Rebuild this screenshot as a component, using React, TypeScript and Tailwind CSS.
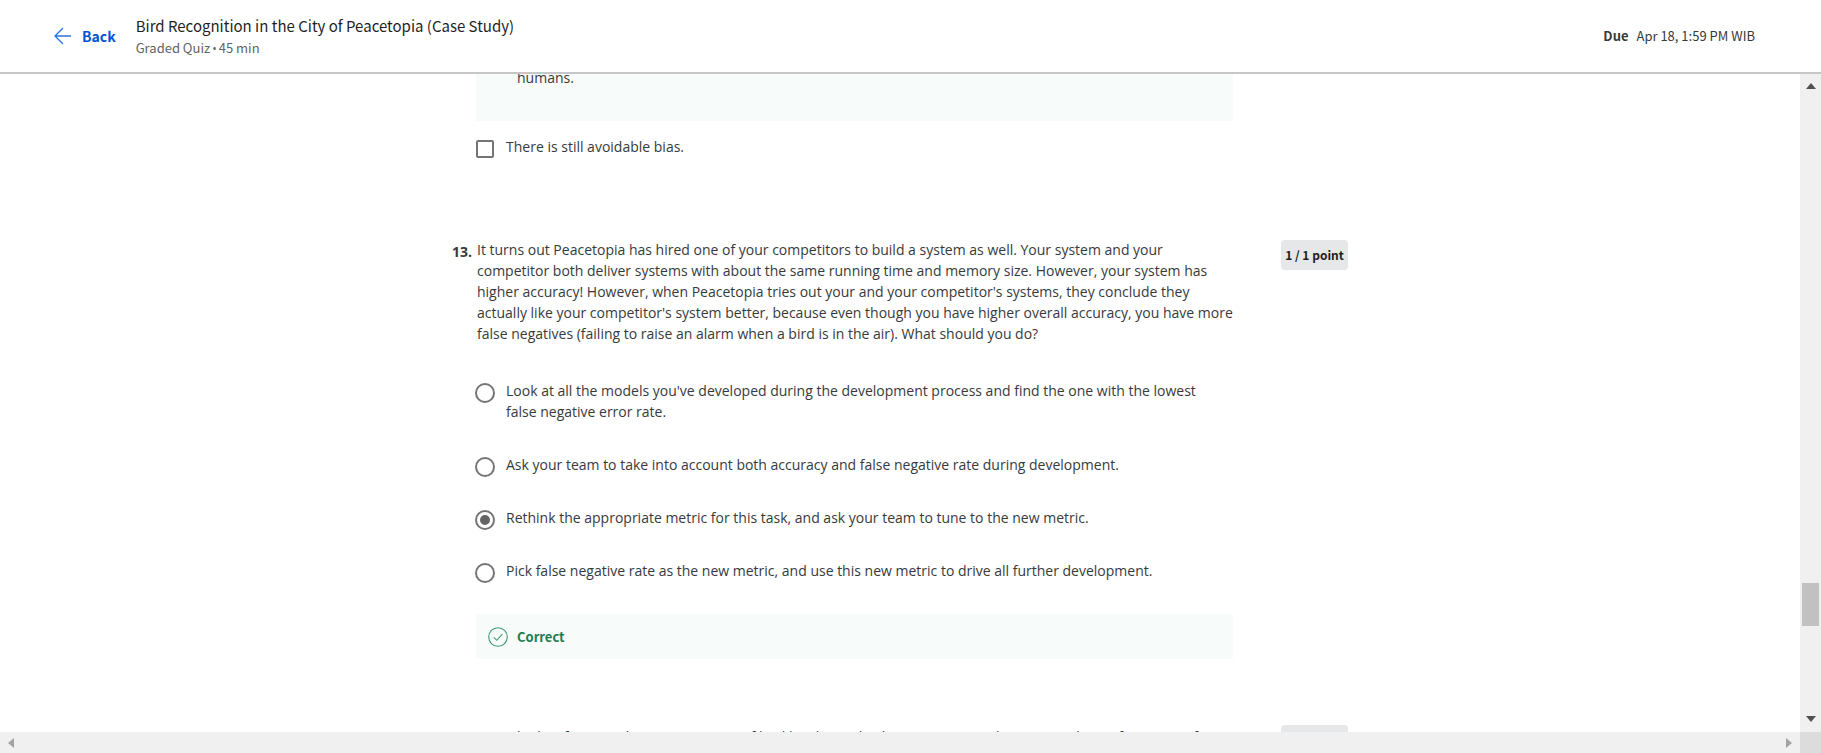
import { useState } from "react";

const options = [
  "Look at all the models you've developed during the development process and find the one with the lowest false negative error rate.",
  "Ask your team to take into account both accuracy and false negative rate during development.",
  "Rethink the appropriate metric for this task, and ask your team to tune to the new metric.",
  "Pick false negative rate as the new metric, and use this new metric to drive all further development.",
];

function Header() {
  return (
    <header className="flex h-[74px] shrink-0 items-center border-b-2 border-[#c7c7c7] bg-white pl-[54px] pr-[66px] font-['Noto_Sans_CJK_SC','Open_Sans',sans-serif]">
      <a href="#back" className="flex items-center gap-[10px] text-[14px] font-bold text-[#0056d2]">
        <svg width="18" height="18" viewBox="0 0 18 18" fill="none" stroke="#2a73e0" strokeWidth="1.3" aria-hidden="true">
          <path d="M17 9H1.2M9 1L1 9l8 8" />
        </svg>
        Back
      </a>
      <div className="ml-5 flex-1 pt-[2px]">
        <h1 className="text-[15px] leading-[22px] text-[#1f1f1f]">Bird Recognition in the City of Peacetopia (Case Study)</h1>
        <p className="text-[13px] leading-[22px] text-[#636363]">
          Graded Quiz<span className="px-[2px] font-['Open_Sans',sans-serif] text-xs">•</span>45 min
        </p>
      </div>
      <p className="flex gap-2 text-[13px] text-[#373a3c]">
        <strong className="font-bold">Due</strong>
        <span>Apr 18, 1:59 PM WIB</span>
      </p>
    </header>
  );
}

function Points() {
  return (
    <div className="ml-12 mt-px h-[30px] w-[67px] shrink-0 self-start whitespace-nowrap rounded bg-[#e5e7e8] text-center font-['Noto_Sans_CJK_SC','Open_Sans',sans-serif] text-xs font-bold leading-[29px] text-[#1f1f1f]">
      1 / 1 point
    </div>
  );
}

function VerticalScrollbar() {
  return (
    <div className="flex w-[21px] shrink-0 flex-col items-center bg-[#f0f0f0] pb-[10px] pt-[9px]" aria-hidden="true">
      <svg width="10" height="6" viewBox="0 0 10 6" fill="#505050">
        <path d="M0 6L5 0l5 6z" />
      </svg>
      <div className="grow-[494]" />
      <div className="h-[43px] w-[17px] bg-[#c1c1c1]" />
      <div className="grow-[90]" />
      <svg width="10" height="6" viewBox="0 0 10 6" fill="#505050">
        <path d="M0 0L5 6l5-6z" />
      </svg>
    </div>
  );
}

function HorizontalScrollbar() {
  return (
    <div className="flex h-[21px] shrink-0 bg-[#f0f0f0]" aria-hidden="true">
      <div className="flex flex-1 items-center justify-between px-2">
        <svg width="6" height="10" viewBox="0 0 6 10" fill="#a3a3a3">
          <path d="M6 0L0 5l6 5z" />
        </svg>
        <svg width="6" height="10" viewBox="0 0 6 10" fill="#a3a3a3">
          <path d="M0 0l6 5-6 5z" />
        </svg>
      </div>
      <div className="w-[21px] bg-[#dcdcdc]" />
    </div>
  );
}

export default function App() {
  const [bias, setBias] = useState(false);
  const [choice, setChoice] = useState(2);

  return (
    <div className="flex h-screen flex-col bg-white font-['Open_Sans','Noto_Sans',sans-serif] text-[#373a3c]">
      <Header />
      <div className="flex min-h-0 flex-1">
        <main className="min-w-0 flex-1 overflow-hidden text-sm leading-[21px]">
          <div className="mx-auto -mt-2 w-full max-w-4xl">
            <section className="ml-6 mr-[115px]">
              <div className="h-[55px] bg-[#f7fbfa] pl-[41px] pt-px">humans.</div>
              <label className="flex items-start gap-3 pt-[15px]">
                <input
                  type="checkbox"
                  checked={bias}
                  onChange={() => setBias(!bias)}
                  className="mt-1 size-[18px] shrink-0 appearance-none rounded-xs border-2 border-[#757575] checked:bg-[#757575]"
                />
                There is still avoidable bias.
              </label>
            </section>

            <section className="mt-[81px] flex">
              <div className="w-6 shrink-0 pt-[2px] font-bold">13.</div>
              <div className="min-w-0 flex-1">
                <p className="pl-px">
                  It turns out Peacetopia has hired one of your competitors to build a system as well. Your system and your
                  competitor both deliver systems with about the same running time and memory size. However, your system has
                  higher accuracy! However, when Peacetopia tries out your and your competitor's systems, they conclude they
                  actually like your competitor's system better, because even though you have higher overall accuracy, you have more
                  false negatives (failing to raise an alarm when a bird is in the air). What should you do?
                </p>
                <div className="mt-9 flex flex-col gap-8">
                  {options.map((text, i) => (
                    <label key={text} className="flex items-start gap-[11px] pr-8">
                      <input
                        type="radio"
                        name="q13"
                        checked={choice === i}
                        onChange={() => setChoice(i)}
                        className="-mb-1 -ml-px mt-[3px] size-5 shrink-0 appearance-none rounded-full border-2 border-[#757575] bg-clip-content p-[3px] checked:bg-[#636363]"
                      />
                      {text}
                    </label>
                  ))}
                </div>
                <div className="mt-[33px] flex h-[45px] items-center gap-[9px] bg-[#f7fbfa] pl-3 font-['Noto_Sans_CJK_SC','Open_Sans',sans-serif] text-[13px] font-bold text-[#1d7c50]">
                  <svg width="20" height="20" viewBox="0 0 20 20" fill="none" stroke="#3f9a72" strokeWidth="1.1" aria-hidden="true">
                    <circle cx="10" cy="10" r="9.3" />
                    <path d="M5.8 10.3l3 3 5.6-6.2" />
                  </svg>
                  Correct
                </div>
              </div>
              <Points />
            </section>

            <section className="mt-[65px] flex">
              <div className="w-6 shrink-0 pt-1 font-bold">14.</div>
              <p className="min-w-0 flex-1 pl-px pt-[2px]">
                Over the last few months, a new species of bird has been slowly migrating into the area, so the performance of your
                system slowly degrades because your data is being tested on a new type of data.
              </p>
              <Points />
            </section>
          </div>
        </main>
        <VerticalScrollbar />
      </div>
      <HorizontalScrollbar />
    </div>
  );
}
